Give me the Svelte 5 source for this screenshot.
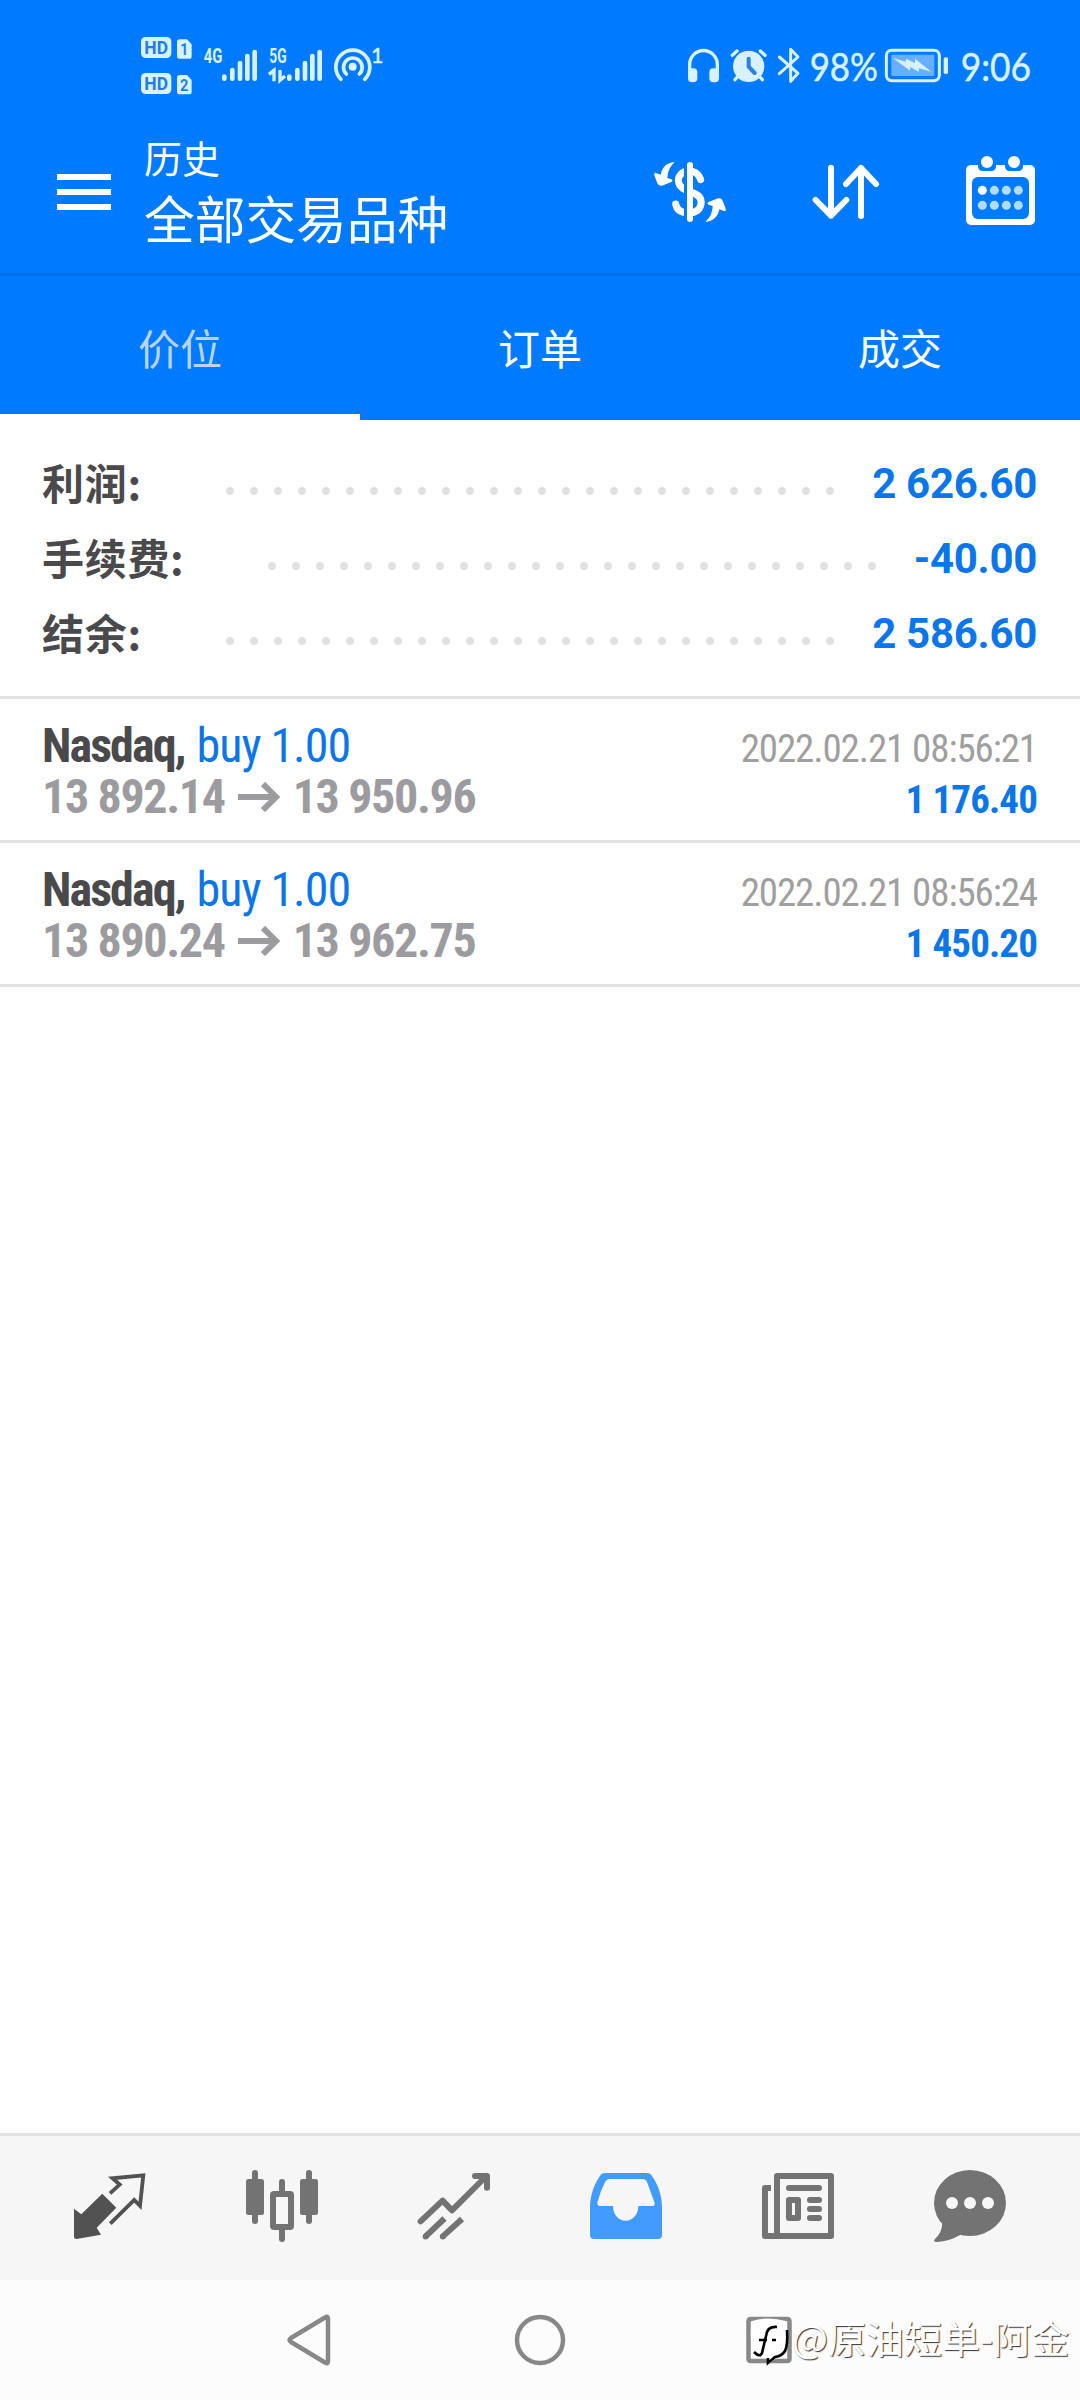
<script>
    let activeTab = $state(0)

    const tabs = ['价位', '订单', '成交']

    const summary = [
        {label: '利润:', value: '2 626.60'},
        {label: '手续费:', value: '-40.00'},
        {label: '结余:', value: '2 586.60'},
    ]

    const deals = [
        {symbol: 'Nasdaq,', side: 'buy 1.00', open: '13 892.14', close: '13 950.96', time: '2022.02.21 08:56:21', profit: '1 176.40'},
        {symbol: 'Nasdaq,', side: 'buy 1.00', open: '13 890.24', close: '13 962.75', time: '2022.02.21 08:56:24', profit: '1 450.20'},
    ]

    const bars = [[313, 165], [337, 145], [360, 124], [382, 103], [404, 91]]
    const dotColumns = [1057, 1093, 1129, 1165]
</script>

{#snippet signal(shift)}
    <g stroke="#d8f1ff" stroke-width="14" stroke-linecap="round">
        {#each bars as [x, top]}
            <path d="M{x + shift} {top + 5}V176"/>
        {/each}
    </g>
{/snippet}

<div class="screen">
    <header>
        <div class="statusBar">
            <svg width="280" height="90" viewBox="0 0 840 270" fill="#d8f1ff">
                <rect x="63" y="51" width="91" height="63" rx="14"/>
                <rect x="63" y="159" width="91" height="63" rx="14"/>
                <path d="M179 58h22l14 15v37q0 6-6 6h-30q-8 0-8-8V66q0-8 8-8zM179 165h22l14 15v37q0 6-6 6h-30q-8 0-8-8V173q0-8 8-8z"/>
                <g class="badge">
                    <text x="73" y="102" font-size="54" textLength="71" lengthAdjust="spacingAndGlyphs">HD</text>
                    <text x="73" y="210" font-size="54" textLength="71" lengthAdjust="spacingAndGlyphs">HD</text>
                    <text x="181" y="106" font-size="50" textLength="24" lengthAdjust="spacingAndGlyphs">1</text>
                    <text x="180" y="213" font-size="50" textLength="25" lengthAdjust="spacingAndGlyphs">2</text>
                </g>
                <g class="network">
                    <text x="251" y="128" font-size="60" textLength="56" lengthAdjust="spacingAndGlyphs">4G</text>
                    <text x="448" y="128" font-size="60" textLength="52" lengthAdjust="spacingAndGlyphs">5G</text>
                </g>
                {@render signal(0)}
                {@render signal(195)}
                <path d="M447 163l15-12v33M480 150v31l15-13" fill="none" stroke="#d8f1ff" stroke-width="10"/>
                <g fill="none" stroke="#d8f1ff" stroke-width="11" stroke-linecap="round">
                    <path d="M663 178a51 51 0 1 1 71 0"/>
                    <path d="M679 162a28 28 0 1 1 39 0"/>
                </g>
                <circle cx="698" cy="140" r="12"/>
                <text class="thin" x="753" y="128" font-size="64">1</text>
            </svg>
            <svg width="380" height="75" viewBox="0 0 1140 225" fill="#d8f1ff">
                <path d="M59 130V104a41 42 0 0 1 83 0v26" fill="none" stroke="#d8f1ff" stroke-width="10"/>
                <rect x="54" y="115" width="28" height="42" rx="12"/>
                <rect x="118" y="115" width="29" height="42" rx="12"/>
                <circle cx="236" cy="109" r="47"/>
                <path d="M187 76l14-13M285 76l-14-13M203 140l-8 9M269 140l8 9" stroke="#d8f1ff" stroke-width="10" stroke-linecap="round"/>
                <path d="M236 86v24l18 19" fill="none" stroke="#2880e8" stroke-width="12" stroke-linecap="round"/>
                <path d="M328 81l56 49-22 24V58l22 23-56 50" fill="none" stroke="#d8f1ff" stroke-width="9" stroke-linejoin="round" stroke-linecap="round"/>
                <text class="thin" x="419" y="152" font-size="114" textLength="205" lengthAdjust="spacingAndGlyphs">98%</text>
                <rect x="649" y="61" width="159" height="91" rx="16" fill="none" stroke="#d8f1ff" stroke-width="9"/>
                <rect x="664" y="74" width="129" height="64" rx="3" fill="#66b0ff"/>
                <path d="M669 84l38 11 1-9 27 13 0-13 49 39-37-10-1 10-25-14-1 11z"/>
                <rect x="821" y="82" width="13" height="50" rx="5"/>
                <text class="thin" x="872" y="152" font-size="114" textLength="211" lengthAdjust="spacingAndGlyphs">9:06</text>
            </svg>
        </div>

        <div class="appBar">
            <button class="menu" aria-label="menu"><i></i><i></i><i></i></button>
            <div class="titles">
                <span class="small">历史</span>
                <span class="big">全部交易品种</span>
            </div>
            <div class="actions">
                <svg viewBox="60 60 240 240">
                    <path d="M212 149C205 127 188 122 175 123C155 125 145 137 145 152C146 174 168 181 185 187C206 194 216 206 213 222C210 240 196 249 178 249C155 249 140 240 137 222"
                          fill="none" stroke="#fff" stroke-width="21" stroke-linecap="round"/>
                    <rect x="162" y="100" width="12" height="170" fill="#007aff"/>
                    <path d="M180 105v162" stroke="#fff" stroke-width="18" stroke-linecap="round"/>
                    <path id="swing" d="M134 96C110 98 96 112 92 134L76 128Q71 129 73 136L82 160Q86 169 96 167L124 156Q131 151 124 148L112 144Q112 116 134 96Z" fill="#fff"/>
                    <use href="#swing" transform="rotate(180 180 186)"/>
                </svg>
                <svg viewBox="525 60 240 240" fill="none" stroke="#fff" stroke-width="18" stroke-linecap="round" stroke-linejoin="round">
                    <path d="M603 113v144M557 210l46 47 46-47M693 258V114M648 162l45-48 45 48"/>
                </svg>
                <svg viewBox="990 60 240 240" fill="#fff">
                    <rect x="1008" y="105" width="207" height="180" rx="15"/>
                    <rect x="1026" y="141" width="171" height="126" rx="18" fill="#007aff"/>
                    <path d="M1044 100h54v8q0 15-15 15h-24q-15 0-15-15zM1125 100h54v8q0 15-15 15h-24q-15 0-15-15z" fill="#007aff"/>
                    <circle cx="1071" cy="96" r="18"/>
                    <circle cx="1152" cy="96" r="18"/>
                    {#each dotColumns as x, i}
                        <circle cx={x} cy="181" r="13.5" fill={i ? '#b2dcff' : '#fff'}/>
                        <circle cx={x} cy="226" r="13.5" fill="#b2dcff"/>
                    {/each}
                </svg>
            </div>
        </div>

        <nav class="tabs">
            {#each tabs as tab, i}
                <button class:active={activeTab === i} onclick={() => activeTab = i}>{tab}</button>
            {/each}
        </nav>
    </header>

    <main>
        <section class="summary">
            {#each summary as row}
                <div class="summaryRow">
                    <span class="label">{row.label}</span>
                    <span class="dots"></span>
                    <span class="value">{row.value}</span>
                </div>
            {/each}
        </section>

        {#each deals as deal}
            <article class="deal">
                <div class="line">
                    <span class="name"><b>{deal.symbol}</b><span class="side">{deal.side}</span></span>
                    <span class="time">{deal.time}</span>
                </div>
                <div class="line">
                    <span class="prices">
                        <span>{deal.open}</span>
                        <svg width="42" height="30" viewBox="0 0 42 30" fill="none" stroke="#9c9ca0" stroke-width="6">
                            <path d="M0 15h38M25 2l13 13-13 13"/>
                        </svg>
                        <span>{deal.close}</span>
                    </span>
                    <span class="profit">{deal.profit}</span>
                </div>
            </article>
        {/each}
    </main>

    <footer class="bottomBar">
        <div>
            <svg viewBox="0 0 72 72">
                <path d="M0 38.7l7.3 5.6 21-20.6 14 14-19.6 20 4.3 7L2.5 69Q0 69 0 66.5z" fill="#525252"/>
                <path d="M36 23.4l9.7-8.8-7.2-6.3 30.8-3-3.3 30.5-5.8-5.9-23.9 23.8" fill="none" stroke="#525252" stroke-width="3.8"/>
            </svg>
        </div>
        <div>
            <svg viewBox="0 0 72 72" fill="#737373">
                <rect x="0" y="9" width="18" height="36" rx="2.5"/>
                <rect x="6" y="0" width="6" height="54" rx="3"/>
                <rect x="54" y="9" width="18" height="36" rx="2.5"/>
                <rect x="60" y="0" width="6" height="54" rx="3"/>
                <rect x="33" y="9" width="6" height="63" rx="3"/>
                <rect x="27" y="24" width="18" height="33" rx="1" fill="#f7f7f7" stroke="#737373" stroke-width="6" stroke-linejoin="round"/>
            </svg>
        </div>
        <div>
            <svg viewBox="0 0 72 72" fill="none" stroke="#737373" stroke-width="6" stroke-linejoin="round">
                <path d="M2.6 51.4l22-20.8 9.4 9.7L68.4 6M57 6h12v11.7" stroke-linecap="round"/>
                <path d="M7.6 66.4L26.5 48.5M24.8 66.4L44 49"/>
                <path d="M7.6 66.4h.01M24.8 66.4h.01" stroke-linecap="round"/>
            </svg>
        </div>
        <div>
            <svg viewBox="0 0 72 72" fill="#429bff">
                <path fill-rule="evenodd" d="M15 3H57Q60.5 3 62 6C69 16 72 27 72 38V65q0 4-4 4H4q-4 0-4-4V38C0 27 3 16 10 6Q11.5 3 15 3ZM20 9Q16.5 9 15 12Q10 22 7.4 32.5Q7 36 10 36H23C23 44 28 50.7 35.7 50.7C43 50.7 48.5 44 48.3 36H62Q65.5 36 64.5 32.5L57 12Q55.5 9 52 9Z"/>
            </svg>
        </div>
        <div>
            <svg viewBox="0 0 72 72" fill="#737373">
                <g fill="none" stroke="#737373" stroke-width="6" stroke-linejoin="round">
                    <path d="M15 6h54v60H15zM9 18H3v48h12"/>
                    <rect x="27" y="30" width="9" height="18"/>
                </g>
                <rect x="24" y="15" width="36" height="6" rx="3"/>
                <rect x="45" y="27" width="15" height="6" rx="3"/>
                <rect x="45" y="36" width="15" height="6" rx="3"/>
                <rect x="45" y="45" width="15" height="6" rx="3"/>
            </svg>
        </div>
        <div>
            <svg viewBox="0 0 72 72" fill="#737373">
                <ellipse cx="36" cy="33" rx="36" ry="33"/>
                <path d="M8.3 53Q8 63 .5 69.5Q-1 72 3 72Q15 71.5 27 64.5Z"/>
                <g fill="#f7f7f7">
                    <circle cx="18" cy="33" r="6"/>
                    <circle cx="36" cy="33" r="6"/>
                    <circle cx="54" cy="33" r="6"/>
                </g>
            </svg>
        </div>
    </footer>

    <div class="systemNav">
        <svg viewBox="0 0 60 60"><path d="M43 7.5Q46 5.5 46 9V51Q46 54.5 43 52.5L9 32Q6 30 9 28Z"/></svg>
        <svg viewBox="0 0 60 60"><circle cx="30" cy="30" r="23"/></svg>
        <svg viewBox="0 0 60 60"><rect x="10.5" y="9" width="41" height="42" rx="2"/></svg>
        <div class="watermark">
            <svg viewBox="0 0 42 50">
                <path d="M4 5Q20 0 38 5Q40 20 38 33Q36 41 28 42L21 48V42Q8 42 5 37Q1 20 4 5Z" fill="#fff"/>
                <path d="M39 14Q40 29 37 35Q34 40 27 41L20 47V42" fill="none" stroke="#000" stroke-width="2.6"/>
                <path d="M29 11Q19 10 18 20L14 37Q12 42 6 36M11 24h8M24 24h4" fill="none" stroke="#000" stroke-width="2.6"/>
            </svg>
            <span>@原油短单-阿金</span>
        </div>
    </div>
</div>

<style>
    :global(body) {
        background: #fff;
    }

    .screen {
        width: 1080px;
        height: 2400px;
        display: flex;
        flex-direction: column;
        font-family: Roboto, "Noto Sans CJK SC", sans-serif;
        overflow: hidden;
    }

    svg {
        display: block;
        flex: none;
    }

    button {
        font: inherit;
        border: none;
        background: none;
        padding: 0;
        margin: 0;
    }

    header {
        background: #007aff;
        color: #fff;
    }

    .statusBar {
        box-sizing: border-box;
        height: 120px;
        padding: 20px 30px 0 120px;
        display: flex;
        justify-content: space-between;
    }

    .statusBar svg + svg {
        margin-top: 10px;
    }

    .badge {
        fill: #1d7fe6;
        font-family: Roboto, sans-serif;
        font-weight: 700;
    }

    .network {
        font-family: Roboto, sans-serif;
        font-weight: 700;
    }

    .thin {
        font-family: Lato, sans-serif;
        stroke: #d8f1ff;
        stroke-width: 1.5;
    }

    .appBar {
        box-sizing: border-box;
        height: 156px;
        padding: 0 40px 0 57px;
        border-bottom: 3px solid #006fe8;
        display: flex;
    }

    .menu {
        width: 54px;
        margin: 54px 33px 0 0;
        display: flex;
        flex-direction: column;
        gap: 9px;
    }

    .menu i {
        width: 54px;
        height: 6px;
        background: #fff;
    }

    .titles {
        display: flex;
        flex-direction: column;
        padding-top: 13px;
    }

    .small {
        font-size: 38px;
        line-height: 54px;
    }

    .big {
        font-size: 50.7px;
        line-height: 69px;
    }

    .actions {
        margin-left: auto;
        padding-top: 30px;
        display: flex;
        gap: 75px;
    }

    .actions svg {
        width: 80px;
        height: 80px;
    }

    .tabs {
        height: 144px;
        display: grid;
        grid-template-columns: repeat(3, 1fr);
    }

    .tabs button {
        font-size: 42px;
        color: #fff;
        border-bottom: 6px solid transparent;
        padding-top: 2px;
    }

    .tabs button.active {
        color: #b9d3ee;
        border-color: #fff;
    }

    main {
        flex: 1;
    }

    .summary {
        box-sizing: border-box;
        height: 279px;
        padding: 26px 43px 0 42px;
        border-bottom: 3px solid #e1e1e1;
    }

    .summaryRow {
        height: 75px;
        display: flex;
        align-items: center;
        font-size: 42px;
        font-weight: 700;
    }

    .label {
        font-family: "Noto Sans CJK SC", sans-serif;
        line-height: 60px;
        padding-bottom: 3px;
        letter-spacing: 0.7px;
        color: #4a4a4d;
    }

    .dots {
        width: 624px;
        height: 24px;
        margin: 15px 0 0 76px;
        background: radial-gradient(circle, #e1e1e1 3.5px, transparent 4.5px) 0 0 / 24px 24px;
    }

    .value {
        margin-left: auto;
        letter-spacing: -0.3px;
        color: #0b76ea;
    }

    .deal {
        box-sizing: border-box;
        height: 144px;
        padding: 21px 43px 0 42px;
        border-bottom: 3px solid #e1e1e1;
        font-size: 48px;
        font-stretch: 75%;
    }

    .line {
        height: 51px;
        line-height: 51px;
        display: flex;
        justify-content: space-between;
        align-items: baseline;
        white-space: nowrap;
    }

    .name {
        display: flex;
        gap: 12px;
    }

    .deal b {
        letter-spacing: -1.9px;
        color: #4a4a4d;
    }

    .side {
        letter-spacing: -1px;
        color: #0b76ea;
    }

    .prices {
        display: flex;
        align-items: center;
        gap: 13px;
        font-weight: 700;
        letter-spacing: -1.35px;
        color: #9c9ca0;
    }

    .prices svg {
        margin-top: 1px;
    }

    .time {
        font-size: 39px;
        letter-spacing: -1.1px;
        color: #9f9f9f;
    }

    .profit {
        font-size: 39px;
        font-weight: 700;
        letter-spacing: -0.9px;
        color: #0b76ea;
    }

    .bottomBar {
        height: 144px;
        padding: 0 24px;
        border-top: 3px solid #e1e1e1;
        background: #f6f6f6;
        display: grid;
        grid-template-columns: repeat(6, 1fr);
        justify-items: center;
    }

    .bottomBar svg {
        width: 72px;
        height: 72px;
        margin-top: 34px;
        overflow: visible;
    }

    .systemNav {
        position: relative;
        height: 120px;
        padding: 0 198px;
        background: #fcfcfc;
        display: grid;
        grid-template-columns: repeat(3, 1fr);
        align-items: center;
        justify-items: center;
    }

    .systemNav > svg {
        width: 60px;
        height: 60px;
        fill: none;
        stroke: #888;
        stroke-width: 4.5;
    }

    .watermark {
        position: absolute;
        left: 748px;
        top: 27px;
        display: flex;
        align-items: center;
        gap: 2px;
        font-family: "Noto Sans CJK SC", sans-serif;
        font-size: 38px;
        line-height: 56px;
        color: #fff;
        text-shadow: 1px 1px 1px #333;
        white-space: nowrap;
    }

    .watermark svg {
        width: 42px;
        height: 50px;
        margin-top: 9px;
    }
</style>
